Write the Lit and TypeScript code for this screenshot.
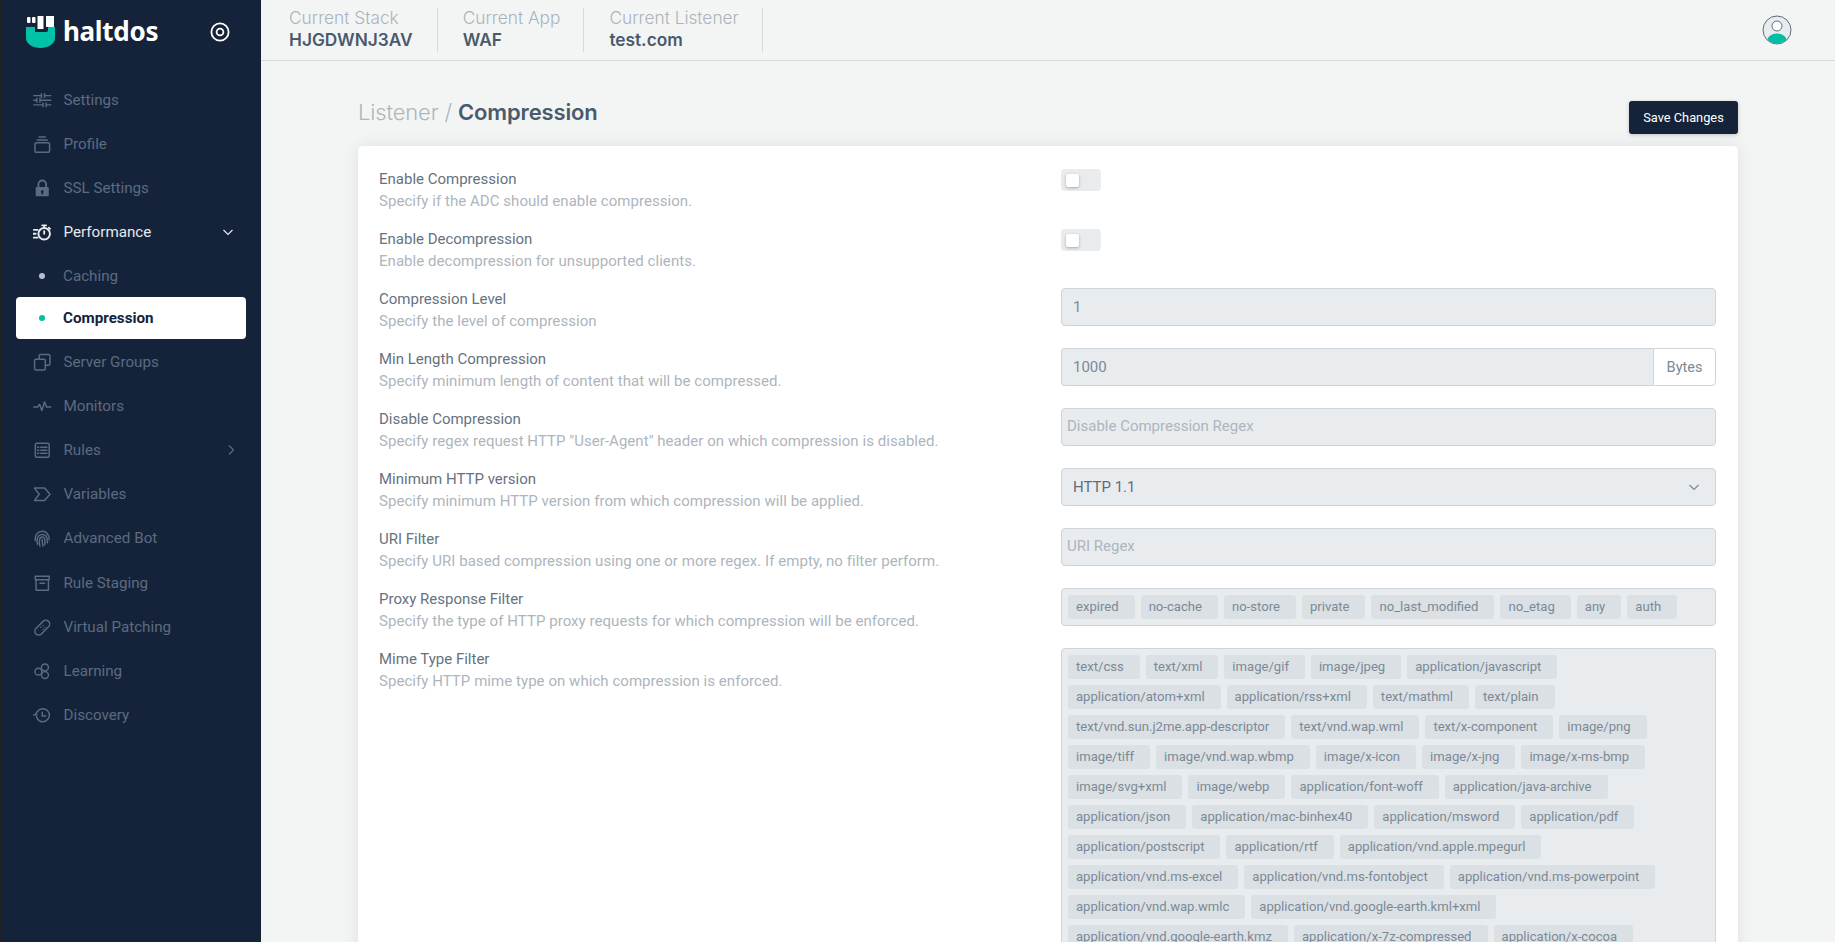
import { LitElement, html, css, svg } from "lit";
import { customElement } from "lit/decorators.js";

const ICONS: Record<string, any> = {
  settings: svg`<path d="M1 6h10M15 6h8M1 12h4M9 12h14M1 18h12M17 18h6M11 3.500v5M15 3.500v5M5 9.500v5M9 9.500v5M13 15.500v5M17 15.500v5"/>`,
  profile: svg`<rect x="2.500" y="10" width="19" height="12.500" rx="2"/><path d="M5.500 6.500h13M8 2.500h8"/>`,
  lock: svg`<path d="M7 11V7a5 5 0 0 1 10 0v4" stroke-width="2.400"/><path fill="currentColor" stroke="none" fill-rule="evenodd" d="M5 10.500h14a1.500 1.500 0 0 1 1.500 1.500v9a1.500 1.500 0 0 1-1.500 1.500H5A1.500 1.500 0 0 1 3.500 21v-9A1.500 1.500 0 0 1 5 10.500zM12 14.500a1.800 1.800 0 0 0-1 3.300V20h2v-2.200a1.800 1.800 0 0 0-1-3.300z"/>`,
  perf: svg`<circle cx="14.500" cy="14" r="7.500" stroke-width="2.500"/><path d="M14.500 10.500V14M12 3h5M14.500 3v3M20.500 6l1.500 1.500M1 9h5M0 14h3.500M1 19h5" stroke-width="2.400"/>`,
  server: svg`<rect x="2" y="8" width="14" height="14" rx="2"/><path d="M8 8V4a2 2 0 0 1 2-2h10a2 2 0 0 1 2 2v10a2 2 0 0 1-2 2h-4"/>`,
  monitor: svg`<path d="M1 13h5l2.500-3.500 3 8 3.500-11 2.500 6.500h5.500"/>`,
  rules: svg`<rect x="3" y="3" width="18" height="18" rx="2"/><path d="M10 8h8M10 12h8M10 16h8M6 8h1.500M6 12h1.500M6 16h1.500"/>`,
  variables: svg`<path d="M2 4h13l7 8-7 8H2l6-8z"/>`,
  bot: svg`<path d="M3 15c-1-8 4-12 9-12s9 4 9 11M6 20c-1-2-1-4-.5-7 .5-3 3-6 6.500-6s6 3 6.500 6c.3 2 .2 3 .2 5M9 22c-1-3-1-6-.5-8s2-3.500 3.500-3.500 3 1.500 3.500 4c.3 2 .2 4-.2 6M12 14c0 3 0 5 1 8"/>`,
  staging: svg`<rect x="3" y="3" width="18" height="4.500"/><path d="M4 7.500V21h16V7.500M9 12h6" />`,
  patch: svg`<rect x="0.500" y="7.500" width="23" height="10" rx="5" transform="rotate(-45 12 12.500)"/><path d="M10 12v.01M13 15v.01M13 10v.01M15.500 12.500v.01"/>`,
  learning: svg`<circle cx="7" cy="12.500" r="4.500"/><circle cx="15.500" cy="7" r="4.500"/><circle cx="15.500" cy="17" r="4.500"/>`,
  discovery: svg`<path d="M4.500 14a8.500 8.500 0 1 0 1-6.500L3 11M0.500 11.500h5M12 8v5h4.500"/>`,
};

type Nav = { label: string; icon?: string; cls?: string; chev?: string };
const NAV: Nav[] = [
  { label: "Settings", icon: "settings" },
  { label: "Profile", icon: "profile" },
  { label: "SSL Settings", icon: "lock" },
  { label: "Performance", icon: "perf", cls: "open", chev: "down" },
  { label: "Caching", cls: "sub" },
  { label: "Compression", cls: "sub active" },
  { label: "Server Groups", icon: "server" },
  { label: "Monitors", icon: "monitor" },
  { label: "Rules", icon: "rules", chev: "right" },
  { label: "Variables", icon: "variables" },
  { label: "Advanced Bot", icon: "bot" },
  { label: "Rule Staging", icon: "staging", cls: "gap" },
  { label: "Virtual Patching", icon: "patch" },
  { label: "Learning", icon: "learning" },
  { label: "Discovery", icon: "discovery" },
];

const CTX = [
  ["Current Stack", "HJGDWNJ3AV"],
  ["Current App", "WAF"],
  ["Current Listener", "test.com"],
];

const PROXY = [["expired", "no-cache", "no-store", "private", "no_last_modified", "no_etag", "any", "auth"]];
const MIME = [
  ["text/css", "text/xml", "image/gif", "image/jpeg", "application/javascript"],
  ["application/atom+xml", "application/rss+xml", "text/mathml", "text/plain"],
  ["text/vnd.sun.j2me.app-descriptor", "text/vnd.wap.wml", "text/x-component", "image/png"],
  ["image/tiff", "image/vnd.wap.wbmp", "image/x-icon", "image/x-jng", "image/x-ms-bmp"],
  ["image/svg+xml", "image/webp", "application/font-woff", "application/java-archive"],
  ["application/json", "application/mac-binhex40", "application/msword", "application/pdf"],
  ["application/postscript", "application/rtf", "application/vnd.apple.mpegurl"],
  ["application/vnd.ms-excel", "application/vnd.ms-fontobject", "application/vnd.ms-powerpoint"],
  ["application/vnd.wap.wmlc", "application/vnd.google-earth.kml+xml"],
  ["application/vnd.google-earth.kmz", "application/x-7z-compressed", "application/x-cocoa"],
];

const chevron = (dir: string) =>
  html`<svg class="chev ${dir}" viewBox="0 0 12 12"><path d=${dir === "down" ? "M1.500 4l4.500 4.500L10.500 4" : "M4 1.500L8.500 6 4 10.500"}/></svg>`;

@customElement("app-root")
export class AppRoot extends LitElement {
  static styles = css`
    :host { display: flex; height: 100vh; overflow: hidden; background: #f3f5f5;
      font-family: Roboto, "Liberation Sans", sans-serif; font-size: 15px; color: #5f6c7b; }
    * { box-sizing: border-box; }
    .side { width: 261px; flex: none; background: #15233a; border-left: 1px solid #222; }
    .brand { height: 78px; display: flex; align-items: flex-start; padding: 15px 31px 0 25px; }
    .logo { width: 29px; height: 32px; flex: none; margin-top: 1px; }
    .brandname { font-family: "Noto Sans", sans-serif; font-weight: 700; font-size: 26px; line-height: 32px; color: #fff; margin-left: 8px; letter-spacing: -.3px; }
    .target { width: 20px; height: 20px; margin-left: auto; margin-top: 7px; flex: none; }
    nav { display: flex; flex-direction: column; }
    .item { height: 44px; margin: 0 15px; padding-left: 17px; display: flex; align-items: center; color: #5b6b80; font-size: 15.200px; border-radius: 4px; }
    .item.gap { margin-top: 1px; }
    .ico { width: 18.500px; height: 18.500px; flex: none; fill: none; stroke: currentColor; stroke-width: 1.900; stroke-linecap: round; stroke-linejoin: round; margin-right: 12px; }
    .item.open { color: #e6e9ed; }
    .item.sub { height: 43px; }
    .dot { width: 6px; height: 6px; border-radius: 50%; background: #b7bec8; margin: 0 18px 0 6px; flex: none; }
    .item.active { height: 42px; margin-bottom: 1px; background: #fff; color: #15233a; font-weight: 700; }
    .item.active .dot { background: #00bfa5; }
    .chev { width: 12px; height: 12px; margin-left: auto; margin-right: 9px; fill: none; stroke: currentColor; stroke-width: 1.200; }
    .chev.down { margin-right: 12px; }
    .main { flex: 1; min-width: 0; display: flex; flex-direction: column; }
    header { height: 61px; flex: none; border-bottom: 1px solid #d6dadd; display: flex; align-items: flex-start; padding: 8px 0 0 3px; }
    .ctx { height: 44px; padding: 0 24px 0 25px; border-right: 1px solid #d6dadd; display: flex; flex-direction: column; font-family: Inter, sans-serif; }
    .ctx + .ctx { padding-right: 23px; }
    .ctx small { font-size: 17.300px; font-weight: 300; line-height: 20px; color: #aab3bc; white-space: nowrap; }
    .ctx b { font-size: 17.300px; font-weight: 600; line-height: 24px; color: #4a5a6c; white-space: nowrap; }
    .avatar { width: 30px; height: 30px; margin-left: auto; margin-right: 43px; margin-top: 7px; flex: none; }
    .content { flex: 1; padding: 0 97px; display: flex; flex-direction: column; min-height: 0; }
    .titlebar { height: 85px; flex: none; display: flex; align-items: flex-start; justify-content: space-between; }
    h1 { margin: 38px 0 0; font: 300 22px/26px Inter, sans-serif; color: #adb5bd; letter-spacing: -.15px; }
    h1 b { font-weight: 600; color: #4a5a6c; }
    .save { margin-top: 40px; width: 109px; height: 33px; background: #15233a; color: #fff; border: 0; border-radius: 3px; font: 12.800px Roboto, sans-serif; box-shadow: 0 1px 4px rgba(0,0,0,.2); padding: 0; }
    .card { background: #fff; border-radius: 5px; box-shadow: 0 0 16px rgba(30,40,60,.1); padding: 22px 22px 22px 21px; flex: none; display: flex; flex-direction: column; gap: 16px; }
    .row { display: grid; grid-template-columns: 682px 655px; }
    .lbl { line-height: 22px; color: #66727f; }
    .desc { margin-top: 1px; line-height: 21px; color: #adb5bd; letter-spacing: .05px; }
    .toggle { width: 40px; height: 22px; margin-top: 1px; background: #e9ecef; border-radius: 4px; padding: 5px 0 0 5px; }
    .toggle i { display: block; width: 13px; height: 13px; background: #fff; border-radius: 2px; box-shadow: 0 1px 3px rgba(0,0,0,.3); }
    .field { height: 38px; width: 100%; display: flex; align-items: center; background: #e9ecef; border: 1px solid #ced4da; border-radius: 4px; color: #7c8995; font-size: 15px; }
    input.field { font: 15px Roboto, sans-serif; padding: 0 0 0 11px; color: #7c8995; outline: none; }
    input.field.ph { padding: 0 0 2px 5px; }
    input.field::placeholder { color: #adb5bd; opacity: 1; }
    .group { display: flex; }
    .group input.field { flex: 1; min-width: 0; border-radius: 4px 0 0 4px; border-right: 0; }
    .addon { width: 63px; height: 38px; flex: none; display: flex; align-items: center; justify-content: center; background: #fff; border: 1px solid #ced4da; border-radius: 0 4px 4px 0; color: #7c8995; font-size: 14.500px; }
    .select { padding-left: 11px; color: #5f6c7b; justify-content: space-between; }
    .select .chev { margin-right: 15px; color: #7c8995; }
    .tags { background: #e9ecef; border: 1px solid #ced4da; border-radius: 4px; padding: 6px 6px 0; display: flex; flex-direction: column; }
    .tagrow { display: flex; gap: 6px; margin-bottom: 6px; }
    .tag { height: 24px; display: flex; align-items: center; padding: 0 16px 1px 8px; background: #dae0e4; border-radius: 3px; color: #7c8995; font-size: 13.100px; white-space: nowrap; }
  `;

  private tags(rows: string[][]) {
    return html`<div class="tags">${rows.map((r) => html`<div class="tagrow">${r.map((t) => html`<span class="tag">${t}</span>`)}</div>`)}</div>`;
  }

  private row(label: string, desc: string, control: unknown) {
    return html`<div class="row"><div><div class="lbl">${label}</div><div class="desc">${desc}</div></div><div>${control}</div></div>`;
  }

  render() {
    const toggle = html`<div class="toggle"><i></i></div>`;
    return html`
      <aside class="side">
        <div class="brand">
          <svg class="logo" viewBox="0 0 29 32">
            <path fill="#00c2a8" d="M0 11h9v5h11c1.500 0 2-1 2-2v-3h7v11c0 6-7 10-14.500 10S0 28 0 22z"/>
            <g fill="#fff"><rect x="1" y="1" width="3.500" height="6" rx="1"/><rect x="6" y="1" width="3.500" height="6" rx="1"/><rect x="11.500" y="0" width="6" height="13"/><rect x="20" y="0" width="8" height="11"/></g>
          </svg>
          <span class="brandname">haltdos</span>
          <svg class="target" viewBox="0 0 20 20" fill="none" stroke="#fff" stroke-width="1.800"><circle cx="10" cy="10" r="8.600"/><circle cx="10" cy="10" r="3.400"/></svg>
        </div>
        <nav>
          ${NAV.map((n) => html`<div class="item ${n.cls ?? ""}">
            ${n.icon ? html`<svg class="ico" viewBox="0 0 24 24">${ICONS[n.icon]}</svg>` : html`<span class="dot"></span>`}
            <span>${n.label}</span>
            ${n.chev ? chevron(n.chev) : ""}
          </div>`)}
        </nav>
      </aside>
      <div class="main">
        <header>
          ${CTX.map(([a, b]) => html`<div class="ctx"><small>${a}</small><b>${b}</b></div>`)}
          <svg class="avatar" viewBox="0 0 30 30">
            <defs><clipPath id="av"><circle cx="15" cy="15" r="13.500"/></clipPath></defs>
            <circle cx="15" cy="15" r="14" fill="#e9ecef" stroke="#5f6c7b" stroke-width="1"/>
            <g clip-path="url(#av)"><ellipse cx="15" cy="26" rx="10" ry="7.500" fill="#00bfa5"/></g>
            <circle cx="15" cy="11" r="5" fill="#fff" stroke="#5f6c7b" stroke-width="1"/>
          </svg>
        </header>
        <div class="content">
          <div class="titlebar">
            <h1>Listener / <b>Compression</b></h1>
            <button class="save">Save Changes</button>
          </div>
          <section class="card">
            ${this.row("Enable Compression", "Specify if the ADC should enable compression.", toggle)}
            ${this.row("Enable Decompression", "Enable decompression for unsupported clients.", toggle)}
            ${this.row("Compression Level", "Specify the level of compression", html`<input class="field" .value=${"1"} disabled />`)}
            ${this.row("Min Length Compression", "Specify minimum length of content that will be compressed.", html`<div class="group"><input class="field" .value=${"1000"} disabled /><span class="addon">Bytes</span></div>`)}
            ${this.row("Disable Compression", 'Specify regex request HTTP "User-Agent" header on which compression is disabled.', html`<input class="field ph" placeholder="Disable Compression Regex" disabled />`)}
            ${this.row("Minimum HTTP version", "Specify minimum HTTP version from which compression will be applied.", html`<div class="field select"><span>HTTP 1.1</span>${chevron("down")}</div>`)}
            ${this.row("URI Filter", "Specify URI based compression using one or more regex. If empty, no filter perform.", html`<input class="field ph" placeholder="URI Regex" disabled />`)}
            ${this.row("Proxy Response Filter", "Specify the type of HTTP proxy requests for which compression will be enforced.", this.tags(PROXY))}
            ${this.row("Mime Type Filter", "Specify HTTP mime type on which compression is enforced.", this.tags(MIME))}
          </section>
        </div>
      </div>
    `;
  }
}
